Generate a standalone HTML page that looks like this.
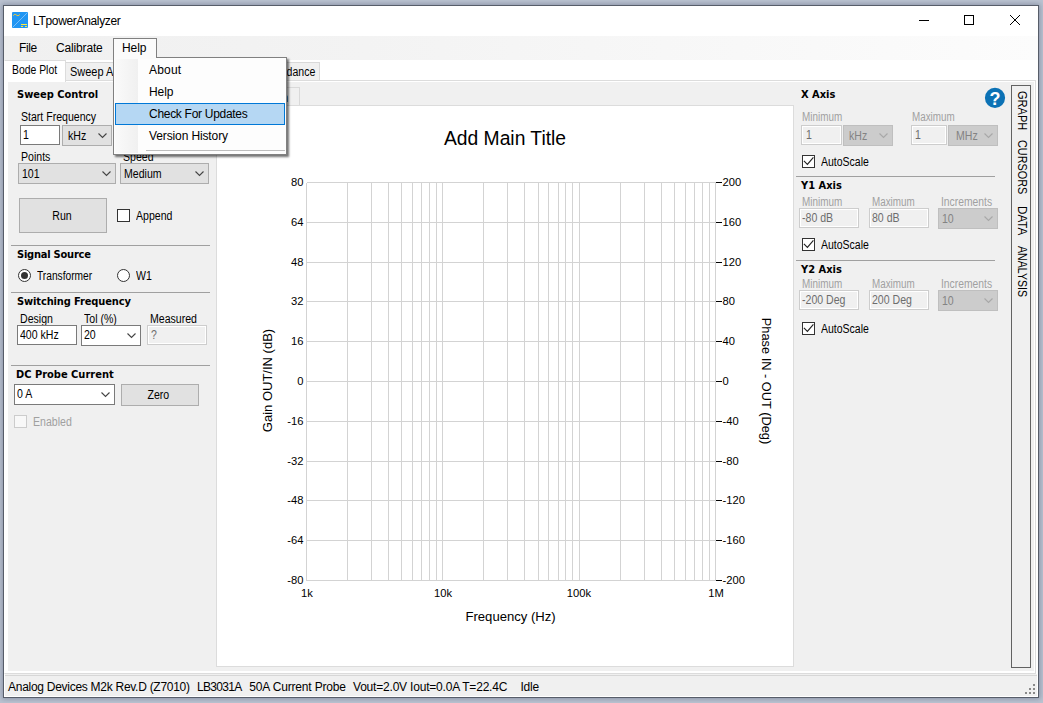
<!DOCTYPE html>
<html><head><meta charset="utf-8"><title>LTpowerAnalyzer</title>
<style>
*{box-sizing:border-box;margin:0;padding:0}
html,body{width:1043px;height:703px;overflow:hidden}
body{position:relative;background:#bbc3d1;font-family:"Liberation Sans",sans-serif;font-size:11px;color:#000}
.abs{position:absolute}
#win{position:absolute;left:3px;top:5px;width:1036px;height:693px;background:#fff;border:1px solid #575d69;box-shadow:0 0 5px 1px rgba(105,115,138,0.6)}
#titlebar{position:absolute;left:4px;top:6px;width:1034px;height:30px;background:#fff}
.seg{font-family:"Liberation Sans",sans-serif;font-size:12px !important;letter-spacing:-0.3px}
#chart{position:absolute;left:0;top:0}
.t{position:absolute;white-space:nowrap;line-height:14px}
.b{font-weight:bold;font-family:"DejaVu Sans Condensed","DejaVu Sans","Liberation Sans",sans-serif;font-size:11px}
.m{display:inline-block;font-size:12px !important;letter-spacing:0;transform:scaleX(0.88);transform-origin:0 0}
.btn .m{transform-origin:50% 0}
.b{letter-spacing:0 !important}
.g{color:#a0a0a0}
.inp{position:absolute;height:20px;background:#fff;border:1px solid #7a7a7a;padding:2px 0 0 2px;line-height:14px;white-space:nowrap;overflow:hidden;font-size:11px}
.inp.dis{background:#f0f0f0;border:1px solid #cdcdcd;box-shadow:inset 0 0 0 1px #fff;color:#6d6d6d}
.cmb{position:absolute;height:21px;background:#e1e1e1;border:1px solid #adadad;padding:3px 0 0 3px;line-height:14px;white-space:nowrap;font-size:11px}
.cmb.w{background:#fff;border-color:#7a7a7a;padding-top:2px}
.cmb.dis{background:#cccccc;border-color:#bfbfbf;color:#838383}
.cmb svg{position:absolute;right:4px;top:7px}
.btn{position:absolute;background:#e1e1e1;border:1px solid #adadad;text-align:center;font-size:11px}
.sep{position:absolute;height:1px;background:#a0a0a0}
.chk{position:absolute;width:13px;height:13px;background:#fff;border:1px solid #333}
.chk.dis{border-color:#ccc;background:#f8f8f8}
.rad{position:absolute;width:13px;height:13px;background:#fff;border:1px solid #333;border-radius:50%}
.rad.on::after{content:"";position:absolute;left:2px;top:2px;width:7px;height:7px;border-radius:50%;background:#333}
.tab{position:absolute;background:#f0f0f0;border:1px solid #d9d9d9;border-bottom:none;font-size:11px;white-space:nowrap;overflow:hidden}
</style></head><body>
<div id="win"></div>
<div id="titlebar"></div>
<!-- title icon -->
<svg class="abs" style="left:12px;top:12px" width="16" height="16" viewBox="0 0 16 16">
<rect width="16" height="16" rx="1" fill="#2196f3"/>
<line x1="1" y1="15" x2="15" y2="1" stroke="#9fd0fa" stroke-width="0.7"/>
<path d="M1.3 3.7 C2 2.1 3.4 2.1 4.4 3 S6.6 4 7.8 2.5" fill="none" stroke="#ffc928" stroke-width="1"/>
<rect x="9" y="12" width="6" height="1" fill="#ffeb3b"/>
<rect x="9" y="14" width="2" height="1" fill="#ffeb3b"/><rect x="13" y="14" width="2" height="1" fill="#ffeb3b"/>
</svg>
<div class="t seg" style="left:33px;top:13px;font-size:12px;line-height:16px;letter-spacing:-0.33px">LTpowerAnalyzer</div>
<!-- window controls -->
<svg class="abs" style="left:910px;top:6px" width="128" height="30" viewBox="0 0 128 30" shape-rendering="crispEdges">
<line x1="9" y1="14.5" x2="19" y2="14.5" stroke="#000"/>
<rect x="54.5" y="9.5" width="9" height="9" fill="none" stroke="#000"/>
<g shape-rendering="auto" stroke="#000" stroke-width="1"><line x1="100" y1="9" x2="110" y2="19"/><line x1="110" y1="9" x2="100" y2="19"/></g>
</svg>

<!-- menubar -->
<div class="abs" style="left:4px;top:36px;width:1034px;height:24px;background:linear-gradient(90deg,#f0f0f0 0%,#f3f3f3 35%,#fcfcfc 100%)"></div>
<div class="t seg" style="left:19px;top:40px;font-size:12px;line-height:16px;letter-spacing:-0.38px">File</div>
<div class="t seg" style="left:56px;top:40px;font-size:12px;line-height:16px;letter-spacing:-0.16px">Calibrate</div>

<!-- main tab control -->
<div class="abs" style="left:4px;top:80px;width:1032px;height:594px;background:#fff;border:1px solid #dcdcdc;border-left-color:#fff"></div>
<div class="abs" style="left:8px;top:82px;width:1026px;height:589px;background:#f0f0f0"></div>
<div class="tab" style="left:65px;top:62px;width:60px;height:18px;padding:2px 0 0 4px;line-height:15px"><span class="m" style="transform:scaleX(0.912)">Sweep Analysis</span></div>
<div class="tab" style="left:258px;top:62px;width:62px;height:18px;padding:2px 4px 0 0;line-height:15px;text-align:right;direction:rtl"><span class="m" style="transform-origin:100% 0">Impedance</span></div>
<div class="tab" style="left:4px;top:60px;width:62px;height:22px;padding:2px 0 0 7px;line-height:15px;border-color:#dcdcdc;border-left-color:#fff;background:#fff"><span class="m" style="transform:scaleX(0.866)">Bode Plot</span></div>

<!-- left panel -->
<div class="t b" style="left:17px;top:88px">Sweep Control</div>
<div class="t m" style="left:21px;top:110px;font-size:11px">Start Frequency</div>
<div class="inp" style="left:20px;top:125px;width:40px"><span class="m">1</span></div>
<div class="cmb" style="left:62px;top:125px;width:50px;padding-left:5px"><span class="m">kHz</span><svg width="9" height="6" viewBox="0 0 9 6"><path d="M0.5 0.5 L4.5 4.5 L8.5 0.5" fill="none" stroke="#444" stroke-width="1.1"/></svg></div>
<div class="t m" style="left:21px;top:150px;font-size:11px">Points</div>
<div class="t m" style="left:123px;top:150px;font-size:11px">Speed</div>
<div class="cmb" style="left:18px;top:163px;width:98px"><span class="m">101</span><svg width="9" height="6" viewBox="0 0 9 6"><path d="M0.5 0.5 L4.5 4.5 L8.5 0.5" fill="none" stroke="#444" stroke-width="1.1"/></svg></div>
<div class="cmb" style="left:120px;top:163px;width:89px"><span class="m">Medium</span><svg width="9" height="6" viewBox="0 0 9 6"><path d="M0.5 0.5 L4.5 4.5 L8.5 0.5" fill="none" stroke="#444" stroke-width="1.1"/></svg></div>
<div class="btn" style="left:19px;top:198px;width:88px;height:35px;line-height:35px;padding-right:2px"><span class="m">Run</span></div>
<div class="chk" style="left:117px;top:209px"></div>
<div class="t m" style="left:136px;top:209px;font-size:11px">Append</div>
<div class="sep" style="left:11px;top:245px;width:199px"></div>
<div class="t b" style="left:17px;top:248px;letter-spacing:-0.22px !important">Signal Source</div>
<div class="rad on" style="left:18px;top:269px"></div>
<div class="t m" style="left:37px;top:269px;font-size:11px;transform:scaleX(0.85)">Transformer</div>
<div class="rad" style="left:117px;top:269px"></div>
<div class="t m" style="left:136px;top:269px;font-size:11px">W1</div>
<div class="sep" style="left:11px;top:292px;width:199px"></div>
<div class="t b" style="left:17px;top:295px;letter-spacing:-0.12px !important">Switching Frequency</div>
<div class="t m" style="left:20px;top:312px;font-size:11px">Design</div>
<div class="t m" style="left:84px;top:312px;font-size:11px">Tol (%)</div>
<div class="t m" style="left:150px;top:312px;font-size:11px">Measured</div>
<div class="inp" style="left:17px;top:325px;width:60px"><span class="m">400 kHz</span></div>
<div class="cmb w" style="left:81px;top:325px;width:60px;padding-left:2px"><span class="m">20</span><svg width="9" height="6" viewBox="0 0 9 6"><path d="M0.5 0.5 L4.5 4.5 L8.5 0.5" fill="none" stroke="#444" stroke-width="1.1"/></svg></div>
<div class="inp dis" style="left:147px;top:325px;width:60px;padding-left:3px"><span class="m">?</span></div>
<div class="sep" style="left:11px;top:365px;width:199px"></div>
<div class="t b" style="left:16px;top:368px">DC Probe Current</div>
<div class="cmb w" style="left:14px;top:384px;width:101px;padding-left:2px"><span class="m">0 A</span><svg width="9" height="6" viewBox="0 0 9 6"><path d="M0.5 0.5 L4.5 4.5 L8.5 0.5" fill="none" stroke="#444" stroke-width="1.1"/></svg></div>
<div class="btn" style="left:121px;top:384px;width:78px;height:22px;line-height:20px;padding-right:3px"><span class="m">Zero</span></div>
<div class="chk dis" style="left:14px;top:415px"></div>
<div class="t m g" style="left:33px;top:415px;font-size:11px">Enabled</div>

<!-- inner tab strip + graph panel -->
<div class="tab" style="left:219px;top:87px;width:81px;height:19px;padding:3px 10.5px 0 0;line-height:15px;text-align:right"><span class="m" style="transform-origin:100% 0">Main</span></div>
<div class="abs" style="left:216px;top:105px;width:578px;height:562px;background:#fff;border:1px solid #dcdcdc"></div>
<svg id="chart" width="1043" height="703" viewBox="0 0 1043 703">
<g stroke="#d3d3d3" stroke-width="1" shape-rendering="crispEdges">
<line x1="306.5" y1="182.5" x2="306.5" y2="580.5"/>
<line x1="347.5" y1="182.5" x2="347.5" y2="580.5"/>
<line x1="371.5" y1="182.5" x2="371.5" y2="580.5"/>
<line x1="388.5" y1="182.5" x2="388.5" y2="580.5"/>
<line x1="401.5" y1="182.5" x2="401.5" y2="580.5"/>
<line x1="412.5" y1="182.5" x2="412.5" y2="580.5"/>
<line x1="421.5" y1="182.5" x2="421.5" y2="580.5"/>
<line x1="429.5" y1="182.5" x2="429.5" y2="580.5"/>
<line x1="436.5" y1="182.5" x2="436.5" y2="580.5"/>
<line x1="442.5" y1="182.5" x2="442.5" y2="580.5"/>
<line x1="483.5" y1="182.5" x2="483.5" y2="580.5"/>
<line x1="507.5" y1="182.5" x2="507.5" y2="580.5"/>
<line x1="524.5" y1="182.5" x2="524.5" y2="580.5"/>
<line x1="538.5" y1="182.5" x2="538.5" y2="580.5"/>
<line x1="548.5" y1="182.5" x2="548.5" y2="580.5"/>
<line x1="558.5" y1="182.5" x2="558.5" y2="580.5"/>
<line x1="565.5" y1="182.5" x2="565.5" y2="580.5"/>
<line x1="572.5" y1="182.5" x2="572.5" y2="580.5"/>
<line x1="579.5" y1="182.5" x2="579.5" y2="580.5"/>
<line x1="620.5" y1="182.5" x2="620.5" y2="580.5"/>
<line x1="644.5" y1="182.5" x2="644.5" y2="580.5"/>
<line x1="661.5" y1="182.5" x2="661.5" y2="580.5"/>
<line x1="674.5" y1="182.5" x2="674.5" y2="580.5"/>
<line x1="685.5" y1="182.5" x2="685.5" y2="580.5"/>
<line x1="694.5" y1="182.5" x2="694.5" y2="580.5"/>
<line x1="702.5" y1="182.5" x2="702.5" y2="580.5"/>
<line x1="709.5" y1="182.5" x2="709.5" y2="580.5"/>
<line x1="715.5" y1="182.5" x2="715.5" y2="580.5"/>
<line x1="306.5" y1="182.5" x2="715.5" y2="182.5"/>
<line x1="306.5" y1="222.5" x2="715.5" y2="222.5"/>
<line x1="306.5" y1="262.5" x2="715.5" y2="262.5"/>
<line x1="306.5" y1="301.5" x2="715.5" y2="301.5"/>
<line x1="306.5" y1="341.5" x2="715.5" y2="341.5"/>
<line x1="306.5" y1="381.5" x2="715.5" y2="381.5"/>
<line x1="306.5" y1="421.5" x2="715.5" y2="421.5"/>
<line x1="306.5" y1="461.5" x2="715.5" y2="461.5"/>
<line x1="306.5" y1="500.5" x2="715.5" y2="500.5"/>
<line x1="306.5" y1="540.5" x2="715.5" y2="540.5"/>
<line x1="306.5" y1="580.5" x2="715.5" y2="580.5"/>
</g>
<g stroke="#000" stroke-width="1" shape-rendering="crispEdges">
<line x1="716" y1="182.5" x2="722" y2="182.5"/>
<line x1="716" y1="222.5" x2="722" y2="222.5"/>
<line x1="716" y1="262.5" x2="722" y2="262.5"/>
<line x1="716" y1="301.5" x2="722" y2="301.5"/>
<line x1="716" y1="341.5" x2="722" y2="341.5"/>
<line x1="716" y1="381.5" x2="722" y2="381.5"/>
<line x1="716" y1="421.5" x2="722" y2="421.5"/>
<line x1="716" y1="461.5" x2="722" y2="461.5"/>
<line x1="716" y1="500.5" x2="722" y2="500.5"/>
<line x1="716" y1="540.5" x2="722" y2="540.5"/>
<line x1="716" y1="580.5" x2="722" y2="580.5"/>
</g>
<g font-family="Liberation Sans, sans-serif" font-size="11.2" fill="#000">
<text x="303.5" y="186.0" text-anchor="end">80</text>
<text x="303.5" y="226.0" text-anchor="end">64</text>
<text x="303.5" y="266.0" text-anchor="end">48</text>
<text x="303.5" y="305.0" text-anchor="end">32</text>
<text x="303.5" y="345.0" text-anchor="end">16</text>
<text x="303.5" y="385.0" text-anchor="end">0</text>
<text x="303.5" y="425.0" text-anchor="end">-16</text>
<text x="303.5" y="465.0" text-anchor="end">-32</text>
<text x="303.5" y="504.0" text-anchor="end">-48</text>
<text x="303.5" y="544.0" text-anchor="end">-64</text>
<text x="303.5" y="584.0" text-anchor="end">-80</text>
<text x="722.5" y="186.0">200</text>
<text x="722.5" y="226.0">160</text>
<text x="722.5" y="266.0">120</text>
<text x="722.5" y="305.0">80</text>
<text x="722.5" y="345.0">40</text>
<text x="722.5" y="385.0">0</text>
<text x="722.5" y="425.0">-40</text>
<text x="722.5" y="465.0">-80</text>
<text x="722.5" y="504.0">-120</text>
<text x="722.5" y="544.0">-160</text>
<text x="722.5" y="584.0">-200</text>
<text x="307" y="596.5" text-anchor="middle">1k</text>
<text x="443" y="596.5" text-anchor="middle">10k</text>
<text x="579" y="596.5" text-anchor="middle">100k</text>
<text x="716" y="596.5" text-anchor="middle">1M</text>
<text x="510.6" y="620.5" text-anchor="middle" font-size="13.1">Frequency (Hz)</text>
<text x="505" y="145" text-anchor="middle" font-size="19.3">Add Main Title</text>
<text transform="translate(272,380.5) rotate(-90)" text-anchor="middle" font-size="13">Gain OUT/IN (dB)</text>
<text transform="translate(761.5,381) rotate(90)" text-anchor="middle" font-size="12.8">Phase IN - OUT (Deg)</text>
</g>
</svg>
<!-- right panel -->
<div class="t b" style="left:801px;top:88px">X Axis</div>
<svg class="abs" style="left:984px;top:87px" width="22" height="22" viewBox="0 0 22 22"><circle cx="11" cy="10.8" r="10.1" fill="#0c72b5"/><text x="11" y="18" text-anchor="middle" font-family="Liberation Sans, sans-serif" font-weight="bold" font-size="18" fill="#fff">?</text></svg>
<div class="t m g" style="left:802px;top:110px;font-size:11px;transform:scaleX(0.825)">Minimum</div>
<div class="t m g" style="left:912px;top:110px;font-size:11px;transform:scaleX(0.82)">Maximum</div>
<div class="inp dis" style="left:801px;top:125px;width:41px;padding-left:4px"><span class="m">1</span></div>
<div class="cmb dis" style="left:843px;top:125px;width:50px;padding-left:5px"><span class="m">kHz</span><svg width="9" height="6" viewBox="0 0 9 6"><path d="M0.5 0.5 L4.5 4.5 L8.5 0.5" fill="none" stroke="#a8a8a8" stroke-width="1.1"/></svg></div>
<div class="inp dis" style="left:911px;top:125px;width:36px;padding-left:3px"><span class="m">1</span></div>
<div class="cmb dis" style="left:948px;top:125px;width:50px;padding-left:7px"><span class="m">MHz</span><svg width="9" height="6" viewBox="0 0 9 6"><path d="M0.5 0.5 L4.5 4.5 L8.5 0.5" fill="none" stroke="#a8a8a8" stroke-width="1.1"/></svg></div>
<div class="chk on" style="left:802px;top:155px"><svg width="11" height="11" viewBox="0 0 11 11"><path d="M0.9 4.9 L4.4 8.3 L10.4 1.4" fill="none" stroke="#222" stroke-width="1.15"/></svg></div>
<div class="t m" style="left:821px;top:155px;font-size:11px;transform:scaleX(0.875)">AutoScale</div>
<div class="sep" style="left:796px;top:176px;width:199px"></div>
<div class="t b" style="left:801px;top:179px">Y1 Axis</div>
<div class="t m g" style="left:802px;top:195px;font-size:11px;transform:scaleX(0.825)">Minimum</div>
<div class="t m g" style="left:872px;top:195px;font-size:11px;transform:scaleX(0.82)">Maximum</div>
<div class="t m g" style="left:941px;top:195px;font-size:11px;transform:scaleX(0.86)">Increments</div>
<div class="inp dis" style="left:799px;top:208px;width:60px"><span class="m">-80 dB</span></div>
<div class="inp dis" style="left:869px;top:208px;width:60px"><span class="m">80 dB</span></div>
<div class="cmb dis" style="left:938px;top:208px;width:60px"><span class="m">10</span><svg width="9" height="6" viewBox="0 0 9 6"><path d="M0.5 0.5 L4.5 4.5 L8.5 0.5" fill="none" stroke="#a8a8a8" stroke-width="1.1"/></svg></div>
<div class="chk on" style="left:802px;top:238px"><svg width="11" height="11" viewBox="0 0 11 11"><path d="M0.9 4.9 L4.4 8.3 L10.4 1.4" fill="none" stroke="#222" stroke-width="1.15"/></svg></div>
<div class="t m" style="left:821px;top:238px;font-size:11px;transform:scaleX(0.875)">AutoScale</div>
<div class="sep" style="left:796px;top:260px;width:199px"></div>
<div class="t b" style="left:801px;top:263px">Y2 Axis</div>
<div class="t m g" style="left:802px;top:277px;font-size:11px;transform:scaleX(0.825)">Minimum</div>
<div class="t m g" style="left:872px;top:277px;font-size:11px;transform:scaleX(0.82)">Maximum</div>
<div class="t m g" style="left:941px;top:277px;font-size:11px;transform:scaleX(0.86)">Increments</div>
<div class="inp dis" style="left:799px;top:290px;width:60px"><span class="m">-200 Deg</span></div>
<div class="inp dis" style="left:869px;top:290px;width:60px"><span class="m">200 Deg</span></div>
<div class="cmb dis" style="left:938px;top:290px;width:60px"><span class="m">10</span><svg width="9" height="6" viewBox="0 0 9 6"><path d="M0.5 0.5 L4.5 4.5 L8.5 0.5" fill="none" stroke="#a8a8a8" stroke-width="1.1"/></svg></div>
<div class="chk on" style="left:802px;top:322px"><svg width="11" height="11" viewBox="0 0 11 11"><path d="M0.9 4.9 L4.4 8.3 L10.4 1.4" fill="none" stroke="#222" stroke-width="1.15"/></svg></div>
<div class="t m" style="left:821px;top:322px;font-size:11px;transform:scaleX(0.875)">AutoScale</div>

<!-- vertical tab strip -->
<div class="abs" style="left:1011px;top:85px;width:20px;height:583px;border:1px solid #626262;background:#f0f0f0"></div>
<div class="t" style="left:1030px;top:90.7px;font-size:12px;transform-origin:0 0;transform:rotate(90deg) scaleX(0.922);line-height:16px">GRAPH</div>
<div class="t" style="left:1030px;top:140px;font-size:12px;transform-origin:0 0;transform:rotate(90deg) scaleX(0.904);line-height:16px">CURSORS</div>
<div class="t" style="left:1030px;top:206.3px;font-size:12px;transform-origin:0 0;transform:rotate(90deg) scaleX(0.973);line-height:16px">DATA</div>
<div class="t" style="left:1030px;top:245.5px;font-size:12px;transform-origin:0 0;transform:rotate(90deg) scaleX(0.885);line-height:16px">ANALYSIS</div>

<!-- status bar -->
<div class="abs" style="left:5px;top:674px;width:1032px;height:22px;background:#f0f0f0"></div>
<div class="abs" style="left:5px;top:675px;width:1032px;height:1px;background:#d7d7d7"></div>
<div class="abs" style="left:4px;top:696px;width:1034px;height:1px;background:#fff"></div>
<div class="t seg" style="left:8px;top:679px;line-height:16px;letter-spacing:-0.275px">Analog Devices M2k Rev.D (Z7010)</div>
<div class="t seg" style="left:197px;top:679px;line-height:16px;letter-spacing:-0.69px">LB3031A</div>
<div class="t seg" style="left:249.3px;top:679px;line-height:16px;letter-spacing:-0.17px">50A Current Probe</div>
<div class="t seg" style="left:353px;top:679px;line-height:16px;letter-spacing:-0.2px">Vout=2.0V Iout=0.0A T=22.4C</div>
<div class="t seg" style="left:520.5px;top:679px;line-height:16px;letter-spacing:-0.25px">Idle</div>
<svg class="abs" style="left:1024px;top:683px" width="12" height="12" viewBox="0 0 12 12" shape-rendering="crispEdges" fill="#8a8a8a">
<rect x="9" y="1" width="2" height="2"/><rect x="5" y="5" width="2" height="2"/><rect x="9" y="5" width="2" height="2"/>
<rect x="1" y="9" width="2" height="2"/><rect x="5" y="9" width="2" height="2"/><rect x="9" y="9" width="2" height="2"/>
</svg>

<!-- Help menu (open) -->
<div class="abs" style="left:113px;top:57px;width:174px;height:98px;background:#fdfdfd;border:1px solid #808080;box-shadow:2px 2px 2px rgba(0,0,0,0.55)"></div>
<div class="abs" style="left:115px;top:59px;width:23px;height:94px;background:linear-gradient(90deg,#fafafa,#f0f0f0)"></div>
<div class="abs" style="left:113px;top:38px;width:44px;height:20px;background:#fbfbfb;border:1px solid #808080;border-bottom:none"></div>
<div class="abs" style="left:114px;top:57px;width:42px;height:2px;background:#fbfbfb"></div>
<div class="t seg" style="left:122px;top:40px;line-height:16px;letter-spacing:-0.05px">Help</div>
<div class="abs" style="left:115px;top:103px;width:170px;height:22px;background:#b5d7f3;border:1px solid #0078d7"></div>
<div class="t seg" style="left:149px;top:62px;line-height:16px;letter-spacing:0.2px">About</div>
<div class="t seg" style="left:149px;top:84px;line-height:16px;letter-spacing:-0.05px">Help</div>
<div class="t seg" style="left:149px;top:106px;line-height:16px;letter-spacing:-0.29px">Check For Updates</div>
<div class="t seg" style="left:149px;top:128px;line-height:16px;letter-spacing:-0.12px">Version History</div>
<div class="abs" style="left:146px;top:150px;width:139px;height:1px;background:#bdbdbd"></div>
</body></html>
